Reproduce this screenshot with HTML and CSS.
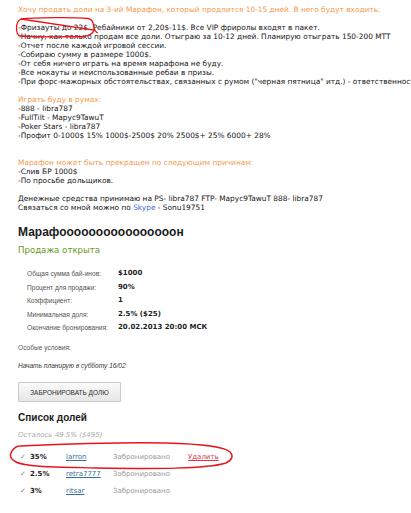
FILE: index.html
```html
<!DOCTYPE html>
<html lang="ru">
<head>
<meta charset="utf-8">
<link rel="stylesheet" href="styles.css">
</head>
<body>
<div class="page">
  <div class="desc">
    <span class="orange">Хочу продать доли на 3-ий Марафон, который продлится 10-15 дней. В него будут входить:</span><br>
    <br>
    -Фризауты до 22$. Ребайники от 2,20$-11$. Все VIP фриролы входят в пакет.<br>
    -Начну, как только продам все доли. Отыграю за 10-12 дней. Планирую отыграть 150-200 МТТ<br>
    -Отчет после каждой игровой сессии.<br>
    -Собираю сумму в размере 1000$.<br>
    -От себя ничего играть на время марафона не буду.<br>
    -Все нокауты и неиспользованные ребаи в призы.<br>
    -При форс-мажорных обстоятельствах, связанных с румом ("черная пятница" итд.) - ответственность несу я.<br>
    <br>
    <span class="orange">Играть буду в румах:</span><br>
    -888 - libra787<br>
    -FullTilt - Марус9TawuT<br>
    -Poker Stars - libra787<br>
    -Профит 0-1000$ 15% 1000$-2500$ 20% 2500$+ 25% 6000+ 28%<br>
    <br>
    <br>
    <span class="orange">Марафон может быть прекращен по следующим причинам:</span><br>
    -Слив БР 1000$<br>
    -По просьбе дольщиков.<br>
    <br>
    Денежные средства принимаю на PS- libra787 FTP- Марус9TawuT 888- libra787<br>
    Связаться со мной можно по <a class="skype" href="#">Skype</a> - Sonu19751
  </div>

  <h2 class="title">Марафоооооооооооооооон</h2>
  <div class="status">Продажа открыта</div>

  <table class="info">
    <tr><td class="lbl">Общая сумма бай-инов:</td><td class="val">$1000</td></tr>
    <tr><td class="lbl">Процент для продажи:</td><td class="val">90%</td></tr>
    <tr><td class="lbl">Коэффициент:</td><td class="val">1</td></tr>
    <tr><td class="lbl">Минимальная доля:</td><td class="val">2.5% ($25)</td></tr>
    <tr><td class="lbl">Окончание бронирования:</td><td class="val">20.02.2013 20:00 МСК</td></tr>
  </table>

  <div class="special">Особые условия:</div>
  <div class="special-text">Начать планирую в субботу 16/02</div>

  <button class="btn" type="button">ЗАБРОНИРОВАТЬ ДОЛЮ</button>

  <h3 class="list-title">Список долей</h3>
  <div class="remain">Осталось 49.5% ($495)</div>

  <ul class="shares">
    <li class="share"><span class="chk">✓</span><span class="pct">35%</span><a class="user" href="#">larron</a><span class="st">Забронировано</span><a class="del" href="#">Удалить</a></li>
    <li class="share"><span class="chk">✓</span><span class="pct">2.5%</span><a class="user" href="#">retra7777</a><span class="st">Забронировано</span></li>
    <li class="share"><span class="chk">✓</span><span class="pct">3%</span><a class="user" href="#">ritsar</a><span class="st">Забронировано</span></li>
  </ul>

  <svg class="mark mark1" width="100" height="30" viewBox="0 0 100 30">
    <path d="M7 3 C20 1.5 60 1 74 2.5 C78 3 79 6 79.5 9 C80 13 81 16 84 17 M80 14 C79 18 76 20 68 20.5 C50 21 25 21 6 20 C3 19 2.5 15 2.5 12 C2.5 8 3 5 7 3 Z" fill="none" stroke="#e8141b" stroke-width="1.3"/>
  </svg>
  <svg class="mark mark2" width="240" height="34" viewBox="0 0 240 34">
    <path d="M14 5 C60 3 120 1 160 2 C198 3 219 6 224 11 C228 15 226 19 220 22 C200 28 150 28 90 27 C50 26 20 26 10 21 C4 18 3 14 6 10 C8 7 11 5 14 5 Z" fill="none" stroke="#e8141b" stroke-width="1.4"/>
  </svg>
</div>
</body>
</html>
```

FILE: styles.css
```css
html, body {
  margin: 0;
  padding: 0;
  background: #fff;
}
.page {
  position: relative;
  width: 411px;
  height: 513px;
  overflow: hidden;
  padding: 5px 0 0 18px;
  box-sizing: border-box;
  font-family: "DejaVu Sans", Verdana, sans-serif;
  color: #161616;
}
.desc {
  font-size: 7.4px;
  line-height: 9px;
  white-space: nowrap;
}
.orange {
  color: #f59a4e;
}
.skype {
  color: #3a6ad8;
  text-decoration: none;
}
.title {
  margin: 12px 0 0;
  font-family: "Liberation Sans", Arial, sans-serif;
  font-size: 12px;
  line-height: 16px;
  font-weight: bold;
  color: #1b1b1b;
}
.status {
  margin-top: 4px;
  font-size: 8.6px;
  line-height: 12px;
  color: #6a9a1c;
}
.info {
  margin: 11px 0 0 9px;
  border-collapse: collapse;
}
.info td {
  padding: 0;
  height: 13.5px;
  line-height: 9px;
}
.lbl {
  width: 91px;
  font-family: "Liberation Sans", Arial, sans-serif;
  font-size: 6.6px;
  color: #555;
}
.val {
  font-size: 7px;
  font-weight: bold;
  color: #1e1e1e;
}
.special {
  margin: 8px 0 0;
  font-family: "Liberation Sans", Arial, sans-serif;
  font-size: 6.6px;
  line-height: 9px;
  color: #555;
}
.special-text {
  margin: 9px 0 0;
  font-family: "Liberation Sans", Arial, sans-serif;
  font-size: 6.6px;
  line-height: 9px;
  font-style: italic;
  color: #333;
}
.btn {
  display: block;
  margin-top: 12.5px;
  width: 103px;
  height: 20px;
  padding: 0;
  font-family: "Liberation Sans", Arial, sans-serif;
  font-size: 6.5px;
  color: #2a2a2a;
  background: linear-gradient(#fafafa, #e6e6e6);
  border: 1px solid #c9c9c9;
  border-radius: 1px;
}
.list-title {
  margin: 8.5px 0 0;
  font-family: "Liberation Sans", Arial, sans-serif;
  font-size: 10px;
  line-height: 13px;
  font-weight: bold;
  color: #1b1b1b;
}
.remain {
  margin-top: 7px;
  font-size: 7px;
  line-height: 9px;
  font-style: italic;
  color: #aaa;
}
.shares {
  list-style: none;
  margin: 8.5px 0 0;
  padding: 0;
}
.share {
  display: flex;
  align-items: center;
  height: 17px;
  font-size: 7px;
}
.chk {
  width: 10px;
  margin-left: 2px;
  color: #888;
  font-size: 7px;
}
.pct {
  width: 36px;
  font-weight: bold;
  color: #1e1e1e;
}
.user {
  width: 47px;
  color: #3b6e98;
}
.st {
  width: 75px;
  color: #999;
}
.del {
  color: #d8334a;
}
.mark {
  position: absolute;
  pointer-events: none;
}
.mark1 {
  left: 14px;
  top: 16px;
}
.mark2 {
  left: 6px;
  top: 441px;
}
```
